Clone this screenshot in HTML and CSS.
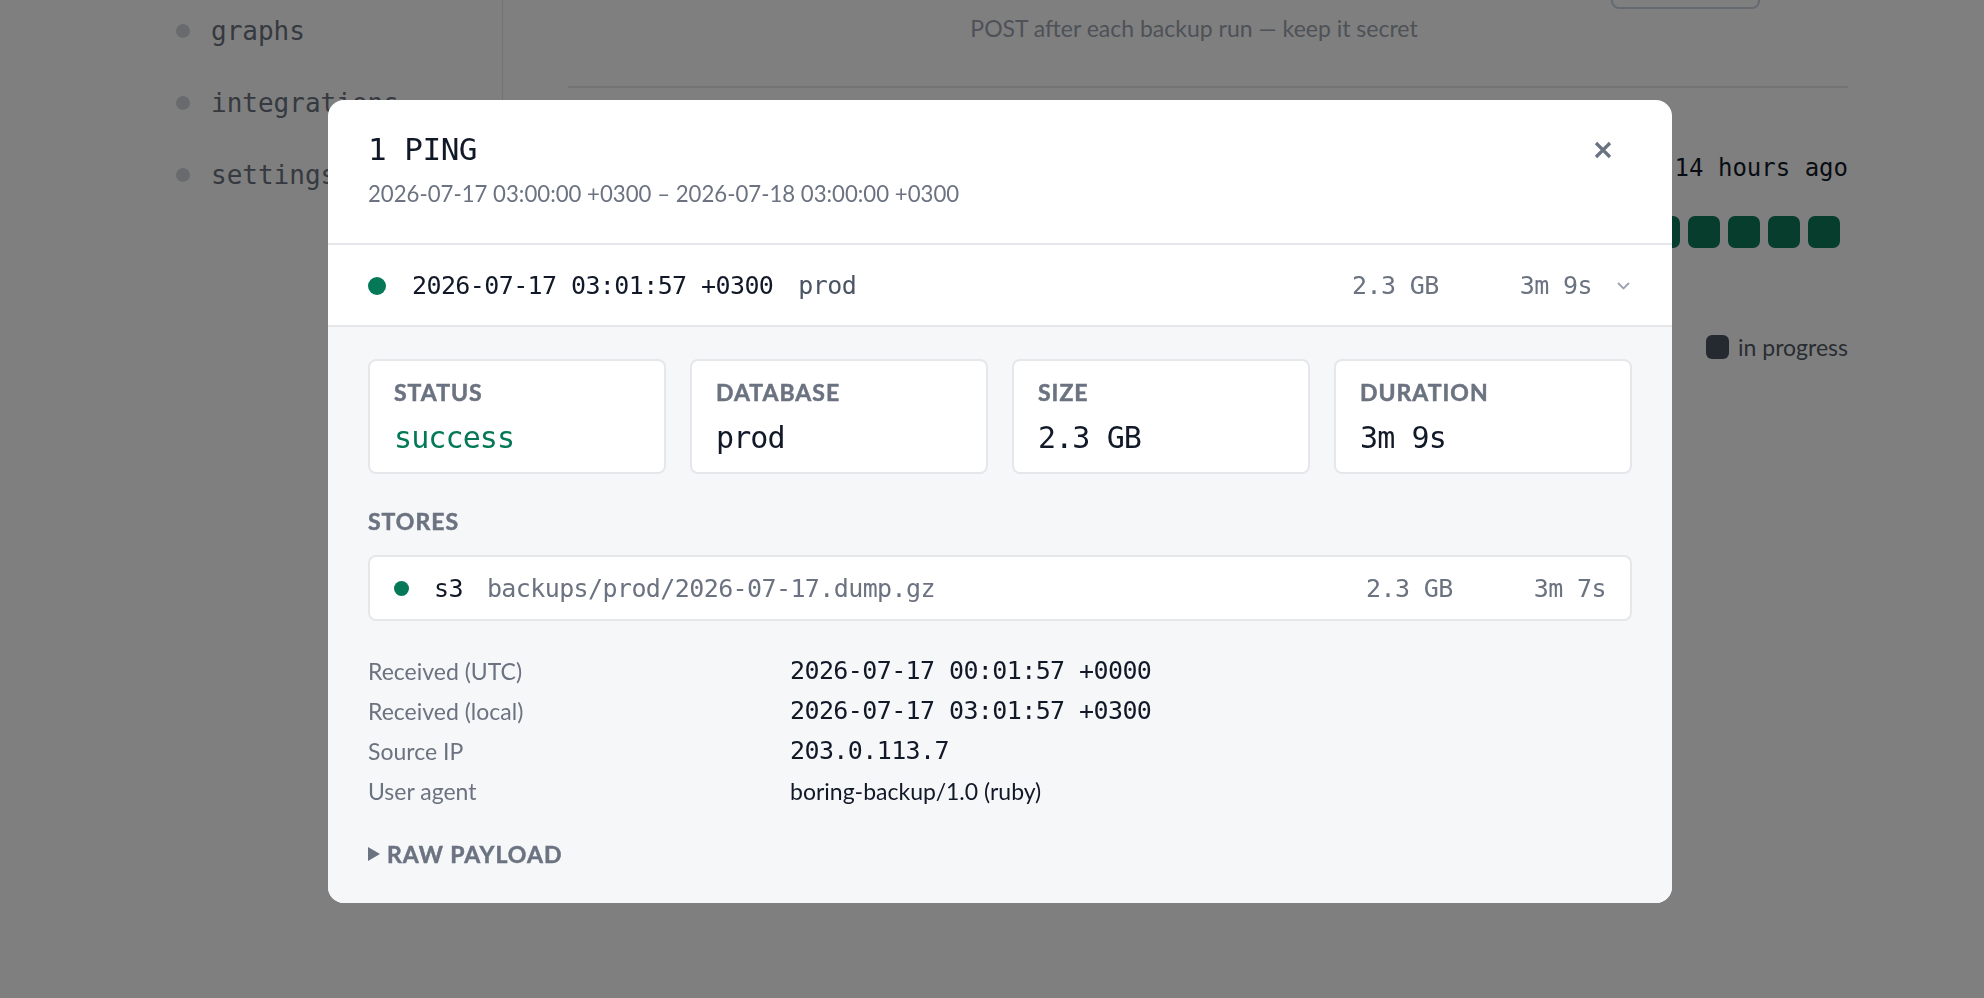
FILE: index.html
```html
<!DOCTYPE html>
<html lang="en">
<head>
<meta charset="utf-8">
<title>Ping details</title>
<link rel="stylesheet" href="styles.css">
</head>
<body>
<div class="page">
  <aside class="sidebar">
    <nav class="nav">
      <a class="nav-item"><span class="nav-dot"></span>graphs</a>
      <a class="nav-item"><span class="nav-dot"></span>integrations</a>
      <a class="nav-item"><span class="nav-dot"></span>settings</a>
    </nav>
  </aside>
  <main class="main">
    <div class="hook-row"><button class="ghost-btn" aria-label="Copy URL"></button></div>
    <p class="help">POST after each backup run — keep it secret</p>
    <hr class="rule">
    <div class="last-ping">last ping 14 hours ago</div>
    <div class="squares">
      <span class="sq"></span><span class="sq"></span><span class="sq"></span><span class="sq"></span><span class="sq"></span>
      <span class="sq"></span><span class="sq"></span><span class="sq"></span><span class="sq"></span><span class="sq"></span>
      <span class="sq"></span><span class="sq"></span><span class="sq"></span><span class="sq"></span><span class="sq"></span>
      <span class="sq"></span><span class="sq"></span><span class="sq"></span><span class="sq"></span><span class="sq"></span>
      <span class="sq"></span><span class="sq"></span><span class="sq"></span><span class="sq"></span><span class="sq"></span>
      <span class="sq"></span><span class="sq"></span><span class="sq"></span><span class="sq"></span><span class="sq"></span>
    </div>
    <div class="legend">
      <span class="legend-item"><span class="sw sw-ok"></span>success</span>
      <span class="legend-item"><span class="sw sw-fail"></span>failed</span>
      <span class="legend-item"><span class="sw sw-prog"></span>in progress</span>
    </div>
  </main>
</div>

<div class="backdrop">
  <section class="modal">
    <header class="modal-head">
      <div class="head-text">
        <h2 class="modal-title">1 PING</h2>
        <p class="modal-range">2026-07-17 03:00:00 +0300 – 2026-07-18 03:00:00 +0300</p>
      </div>
      <button class="close" aria-label="Close">
        <svg width="18" height="18" viewBox="0 0 18 18"><path d="M2 2 L16 16 M16 2 L2 16" stroke="#6b7280" stroke-width="3.2" fill="none"/></svg>
      </button>
    </header>

    <div class="ping-row">
      <span class="dot"></span>
      <span class="ts">2026-07-17 03:01:57 +0300</span>
      <span class="db">prod</span>
      <span class="num">2.3 GB</span>
      <span class="num dur">3m 9s</span>
      <svg class="chev" width="13" height="8" viewBox="0 0 13 8"><path d="M1 1 L6.5 6.5 L12 1" stroke="#9ca3af" stroke-width="1.8" fill="none"/></svg>
    </div>

    <div class="modal-body">
      <div class="stats">
        <div class="stat"><span class="label">STATUS</span><span class="stat-value ok">success</span></div>
        <div class="stat"><span class="label">DATABASE</span><span class="stat-value">prod</span></div>
        <div class="stat"><span class="label">SIZE</span><span class="stat-value">2.3 GB</span></div>
        <div class="stat"><span class="label">DURATION</span><span class="stat-value">3m 9s</span></div>
      </div>

      <h3 class="label section-label">STORES</h3>
      <div class="store-row">
        <span class="dot small"></span>
        <span class="store-name">s3</span>
        <span class="store-path">backups/prod/2026-07-17.dump.gz</span>
        <span class="num">2.3 GB</span>
        <span class="num dur">3m 7s</span>
      </div>

      <dl class="info">
        <dt>Received (UTC)</dt><dd class="mono">2026-07-17 00:01:57 +0000</dd>
        <dt>Received (local)</dt><dd class="mono">2026-07-17 03:01:57 +0300</dd>
        <dt>Source IP</dt><dd class="mono">203.0.113.7</dd>
        <dt>User agent</dt><dd>boring-backup/1.0 (ruby)</dd>
      </dl>

      <div class="raw">
        <svg width="12" height="14" viewBox="0 0 12 14"><path d="M0 0 L12 7 L0 14 Z" fill="#6b7280"/></svg>
        <span class="label">RAW PAYLOAD</span>
      </div>
    </div>
  </section>
</div>
</body>
</html>
```

FILE: styles.css
```css
* { box-sizing: border-box; }

html, body {
  margin: 0;
  padding: 0;
}

body {
  width: 1984px;
  height: 998px;
  overflow: hidden;
  background: #ffffff;
  font-family: Lato, "Liberation Sans", sans-serif;
  color: #111827;
}

/* ---------- background page (scrolled) ---------- */
.page {
  display: flex;
  margin-top: -44px;
}

.sidebar {
  flex: none;
  width: 503px;
  border-right: 1px solid #e5e7eb;
  padding: 39px 0 0 176px;
}

.nav {
  display: flex;
  flex-direction: column;
}

.nav-item {
  display: flex;
  align-items: center;
  gap: 21px;
  height: 72px;
  font-family: "DejaVu Sans Mono", monospace;
  font-size: 26px;
  color: #6b7280;
  text-decoration: none;
}

.nav-dot {
  flex: none;
  width: 14px;
  height: 14px;
  border-radius: 50%;
  background: #d1d5db;
}

.main {
  flex: 1;
  padding: 0 136px 0 65px;
}

.hook-row {
  display: flex;
  justify-content: flex-end;
  padding: 5px 88px 0 0;
}

.ghost-btn {
  width: 149px;
  height: 48px;
  border: 2px solid #cbd5e1;
  border-radius: 8px;
  background: transparent;
}

.help {
  margin: 2px 28px 0 0;
  line-height: 34px;
  font-size: 23px;
  text-align: center;
  color: #9ca3af;
}

.rule {
  margin: 41px 0 0;
  border: 0;
  border-top: 2px solid #e5e7eb;
}

.last-ping {
  margin-top: 63px;
  line-height: 34px;
  text-align: right;
  font-family: "DejaVu Sans Mono", monospace;
  font-size: 24px;
  color: #111827;
}

.squares {
  display: flex;
  justify-content: flex-end;
  gap: 8px;
  margin-top: 31px;
  padding-right: 8px;
}

.sq {
  width: 32px;
  height: 32px;
  border-radius: 7px;
  background: #0c7a58;
}

.legend {
  display: flex;
  justify-content: flex-end;
  gap: 60px;
  margin-top: 82px;
  line-height: 34px;
  font-size: 23px;
  color: #525a66;
}

.legend-item {
  display: flex;
  align-items: center;
  gap: 9px;
}

.sw {
  width: 23px;
  height: 24px;
  border-radius: 6px;
}
.sw-ok { background: #0c7a58; }
.sw-fail { background: #dc2626; }
.sw-prog { background: #4b5563; }

/* ---------- modal ---------- */
.backdrop {
  position: fixed;
  inset: 0;
  display: flex;
  align-items: center;
  justify-content: center;
  padding: 4px 0 0 16px;
  background: rgba(0, 0, 0, 0.5);
}

.modal {
  width: 1344px;
  background: #ffffff;
  border-radius: 16px;
  overflow: hidden;
}

.modal-head {
  display: flex;
  justify-content: space-between;
  align-items: flex-start;
  padding: 28px 49px 32px 40px;
  border-bottom: 2px solid #e5e7eb;
}

.modal-title {
  margin: 0;
  font-family: "DejaVu Sans Mono", monospace;
  font-size: 31px;
  font-weight: 400;
  letter-spacing: -0.5px;
  line-height: 43px;
  color: #111827;
}

.modal-range {
  margin: 6px 0 0;
  font-size: 22.2px;
  line-height: 34px;
  color: #6b7280;
}

.close {
  display: flex;
  align-items: center;
  justify-content: center;
  width: 40px;
  height: 40px;
  margin-top: 2px;
  padding: 0;
  border: 0;
  background: none;
}

.ping-row {
  display: flex;
  align-items: center;
  height: 82px;
  padding: 2px 42px 0 40px;
  border-bottom: 2px solid #e5e7eb;
  font-family: "DejaVu Sans Mono", monospace;
  font-size: 25px;
  letter-spacing: -0.6px;
}

.dot {
  flex: none;
  width: 18px;
  height: 18px;
  border-radius: 50%;
  background: #047857;
}

.dot.small {
  width: 15px;
  height: 15px;
}

.ts {
  margin-left: 26px;
  color: #111827;
}

.db {
  flex: 1;
  margin-left: 25px;
  color: #4b5563;
}

.num {
  color: #6b7280;
}

.dur {
  margin-left: 81px;
}

.chev {
  margin-left: 25px;
}

.modal-body {
  padding: 32px 40px 35px;
  background: #f6f7f9;
}

.stats {
  display: grid;
  grid-template-columns: repeat(4, 1fr);
  gap: 24px;
}

.stat {
  display: flex;
  flex-direction: column;
  gap: 14px;
  padding: 17px 24px 16px;
  background: #ffffff;
  border: 2px solid #e5e7eb;
  border-radius: 8px;
}

.label {
  font-family: Lato, sans-serif;
  font-size: 23px;
  font-weight: 700;
  line-height: 28px;
  letter-spacing: 1px;
  -webkit-text-stroke: 0.5px currentColor;
  color: #6b7280;
}

.stat-value {
  font-family: "DejaVu Sans Mono", monospace;
  font-size: 30px;
  letter-spacing: -0.9px;
  line-height: 36px;
  color: #111827;
}

.stat-value.ok {
  color: #047857;
}

.section-label {
  margin: 33px 0 20px;
}

.store-row {
  display: flex;
  align-items: center;
  height: 66px;
  padding: 2px 24px 0;
  background: #ffffff;
  border: 2px solid #e5e7eb;
  border-radius: 8px;
  font-family: "DejaVu Sans Mono", monospace;
  font-size: 25px;
  letter-spacing: -0.6px;
}

.store-name {
  margin-left: 25px;
  color: #111827;
}

.store-path {
  flex: 1;
  margin-left: 24px;
  color: #6b7280;
}

.info {
  display: grid;
  grid-template-columns: 422px 1fr;
  margin: 30px 0 0;
  line-height: 40px;
}

.info dt {
  font-size: 23px;
  color: #6b7280;
}

.info dd {
  margin: 0;
  font-size: 23px;
  color: #111827;
}

.info dd.mono {
  font-family: "DejaVu Sans Mono", monospace;
  font-size: 25px;
  letter-spacing: -0.6px;
}

.raw {
  display: flex;
  align-items: center;
  gap: 7px;
  margin-top: 29px;
}

.raw .label {
  letter-spacing: 1px;
}
```
